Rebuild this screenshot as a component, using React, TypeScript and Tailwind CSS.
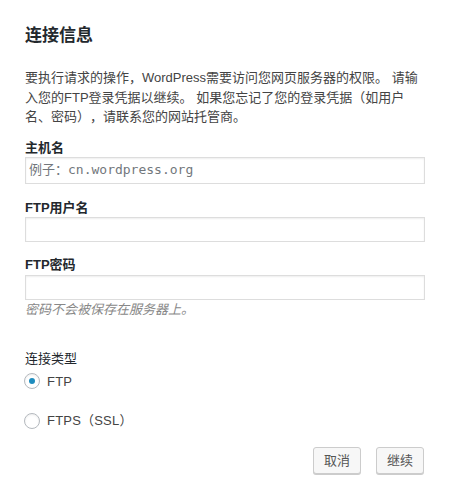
import { useState } from "react";

const font = "font-['Liberation_Sans','Noto_Sans_CJK_SC',sans-serif] [text-spacing-trim:space-all]";

const Radio = ({ checked, label, onClick }: { checked: boolean; label: string; onClick: () => void }) => (
  <label onClick={onClick} className="flex items-center h-[19.5px] cursor-pointer">
    <span className="-ml-px flex h-4 w-4 items-center justify-center rounded-full border border-[#b4b9be] bg-white shadow-[inset_0_1px_2px_rgba(0,0,0,0.07)]">
      {checked && <span className="h-[6px] w-[6px] rounded-full bg-[#1e8cbe]" />}
    </span>
    <span className="ml-[7px] text-[13px] leading-[19.5px] tracking-[0.2px] text-[#444]">{label}</span>
  </label>
);

export default function App() {
  const [type, setType] = useState("ftp");

  return (
    <div className={`min-h-screen bg-white pl-[25px] pr-[24px] pt-[25px] ${font}`}>
      <h2 className="text-[17px] leading-[22px] font-semibold text-[#23282d]">连接信息</h2>

      <p className="mt-[21px] text-[13px] leading-[19.5px] text-[#444]">
        要执行请求的操作，WordPress需要访问您网页服务器的权限。 请输入您的FTP登录凭据以继续。 如果您忘记了您的登录凭据（如用户名、密码），请联系您的网站托管商。
      </p>

      {/* Host */}
      <label className="mt-[11px] block text-[13px] leading-[19.5px] font-semibold text-[#23282d]">主机名</label>
      <input
        className="block h-[27px] w-full border border-[#ddd] bg-white pl-[3px] pb-[2px] text-[13px] text-[#32373c] shadow-[inset_0_1px_2px_rgba(0,0,0,0.07)] outline-none font-['DejaVu_Sans_Mono','Noto_Sans_CJK_SC',monospace] placeholder:text-[#72777c]"
        placeholder="例子：cn.wordpress.org"
      />

      {/* Username */}
      <label className="mt-[13.5px] block text-[13px] leading-[19.5px] font-semibold text-[#23282d]">FTP用户名</label>
      <input className="block h-[25px] w-full border border-[#ddd] bg-white px-[5px] text-[13px] shadow-[inset_0_1px_2px_rgba(0,0,0,0.07)] outline-none" />

      {/* Password */}
      <label className="mt-[13px] block text-[13px] leading-[19.5px] font-semibold text-[#23282d]">FTP密码</label>
      <input type="password" className="block h-[25px] w-full border border-[#ddd] bg-white px-[5px] text-[13px] shadow-[inset_0_1px_2px_rgba(0,0,0,0.07)] outline-none" />
      <p className="text-[13px] leading-[19.5px] italic text-[#888]">密码不会被保存在服务器上。</p>

      {/* Connection type */}
      <div className="mt-[30px] text-[13px] leading-[19.5px] text-[#23282d]">连接类型</div>
      <div className="mt-[3px] flex flex-col gap-[20px]">
        <Radio checked={type === "ftp"} label="FTP" onClick={() => setType("ftp")} />
        <Radio checked={type === "ftps"} label="FTPS（SSL）" onClick={() => setType("ftps")} />
      </div>

      <div className="mt-[16px] flex justify-end gap-[15px] pr-px">
        <button className="h-[27px] rounded-[3px] border border-[#ccc] bg-[#f7f7f7] px-[10px] text-[13px] leading-[25px] text-[#555] shadow-[0_1px_0_#ccc]">
          取消
        </button>
        <button className="h-[27px] rounded-[3px] border border-[#ccc] bg-[#f7f7f7] px-[10px] text-[13px] leading-[25px] text-[#555] shadow-[0_1px_0_#ccc]">
          继续
        </button>
      </div>
    </div>
  );
}
